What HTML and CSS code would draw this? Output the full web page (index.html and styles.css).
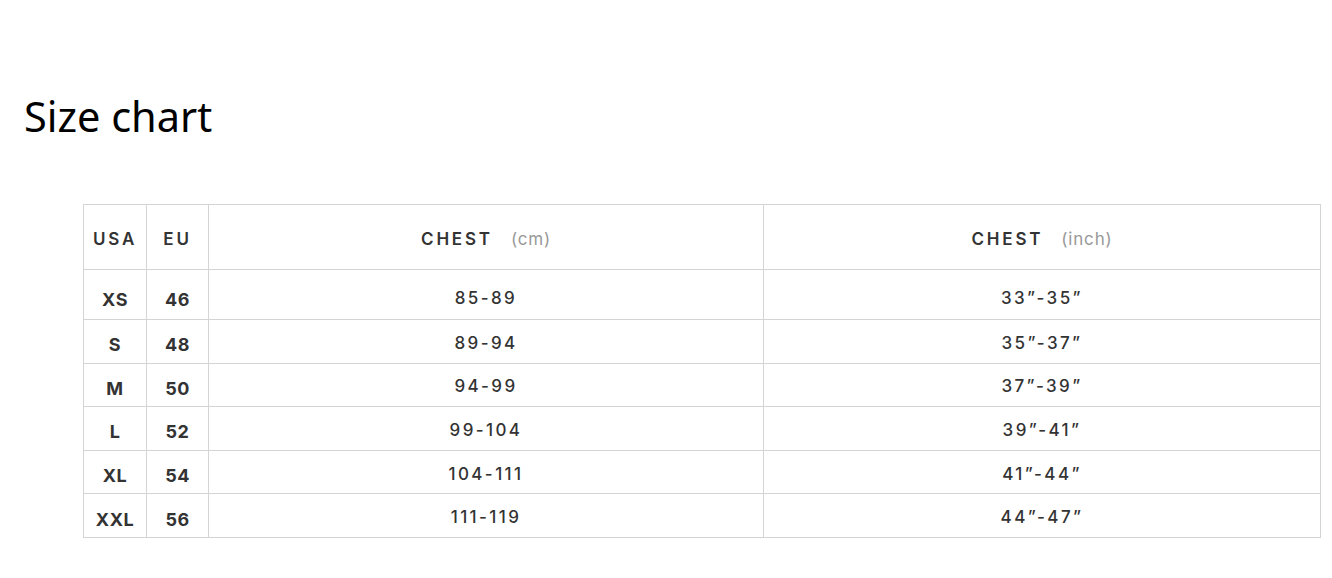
FILE: index.html
```html
<!DOCTYPE html>
<html lang="en">
<head>
<meta charset="utf-8">
<title>Size chart</title>
<link rel="stylesheet" href="styles.css">
</head>
<body>
<main class="page">
  <h1 class="title">Size chart</h1>
  <table class="chart">
    <colgroup>
      <col class="c-usa"><col class="c-eu"><col class="c-cm"><col class="c-in">
    </colgroup>
    <thead>
      <tr class="head">
        <th>USA</th>
        <th>EU</th>
        <th>CHEST <span class="unit">(cm)</span></th>
        <th>CHEST <span class="unit">(inch)</span></th>
      </tr>
    </thead>
    <tbody>
      <tr class="row first"><td class="sz">XS</td><td class="sz">46</td><td>85-89</td><td>33”-35”</td></tr>
      <tr class="row"><td class="sz">S</td><td class="sz">48</td><td>89-94</td><td>35”-37”</td></tr>
      <tr class="row"><td class="sz">M</td><td class="sz">50</td><td>94-99</td><td>37”-39”</td></tr>
      <tr class="row"><td class="sz">L</td><td class="sz">52</td><td>99-104</td><td>39”-41”</td></tr>
      <tr class="row"><td class="sz">XL</td><td class="sz">54</td><td>104-111</td><td>41”-44”</td></tr>
      <tr class="row"><td class="sz">XXL</td><td class="sz">56</td><td>111-119</td><td>44”-47”</td></tr>
    </tbody>
  </table>
</main>
</body>
</html>
```
FILE: styles.css
```css
html, body {
  margin: 0;
  padding: 0;
  background: #fff;
}
.page {
  padding: 88px 12px 0 24px;
}
.title {
  margin: 0;
  font-family: "Noto Sans", "Open Sans", sans-serif;
  font-weight: 400;
  font-size: 41.5px;
  line-height: 56px;
  color: #000;
}
.chart {
  margin: 60px 0 0 59px;
  border-collapse: collapse;
  width: 1237px;
  table-layout: fixed;
  font-family: Inter, Lato, sans-serif;
  color: #333;
}
.c-usa { width: 63px; }
.c-eu { width: 62px; }
.c-cm { width: 555px; }
.c-in { width: 557px; }
.chart th, .chart td {
  border: 1px solid #d4d4d4;
  text-align: center;
  padding: 0;
  vertical-align: middle;
}
.head { height: 65px; }
.row { height: 43.6px; }
.row.first { height: 50px; }
.chart th {
  font-size: 17px;
  font-weight: 600;
  letter-spacing: 2.8px;
  padding-top: 4px;
}
.chart .unit {
  font-weight: 400;
  color: #999;
  letter-spacing: 0.8px;
  margin-left: 11px;
}
.chart td {
  font-size: 17px;
  font-weight: 500;
  letter-spacing: 2.4px;
  padding-top: 3px;
}
.chart tr.first td {
  padding-top: 6px;
}
.chart td.sz {
  font-size: 18px;
  font-weight: 700;
  letter-spacing: 0.5px;
  padding-top: 7px;
}
.chart tr.first td.sz {
  padding-top: 9px;
}
```
